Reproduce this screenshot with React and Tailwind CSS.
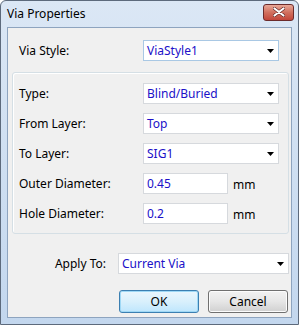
const font = { fontFamily: '"Noto Sans", "DejaVu Sans", sans-serif' };

const Arrow = () => (
    <svg width="7" height="4" viewBox="0 0 7 4" className="shrink-0">
        <path d="M0 0H7L3.5 4Z" fill="#000" />
    </svg>
);

const Select = ({ value, width = 'w-[136px]', focused = false }) => (
    <div className={`${width} h-[21px] flex items-center justify-between pl-[3px] pr-[4px] bg-white border ${focused ? 'border-[#a9c8e4]' : 'border-[#d6d9dd]'} text-[#2010c8] text-[12px]`}>
        <span>{value}</span>
        <Arrow />
    </div>
);

const Input = ({ value }) => (
    <div className="w-[85px] h-[21px] flex items-center pl-[3px] bg-white border border-[#d6d9dd] text-[#2010c8] text-[12px]">
        {value}
    </div>
);

const Row = ({ label, children }) => (
    <div className="flex items-center h-[21px]">
        <div className="w-[130px] pl-[6px] text-[12px] text-black">{label}</div>
        {children}
    </div>
);

const App = () => {
    return (
        <div style={font} className="w-[299px] h-[325px] flex flex-col bg-gradient-to-b from-[#dbe7f5] to-[#c3d7ee] border border-[#5d6a7c] rounded-t-[6px]">
            <div className="h-[26px] shrink-0 flex items-center justify-between pl-[6px] pr-[4px]">
                <span className="text-[12px] text-black mt-[-1px]">Via Properties</span>
                <div className="w-[31px] h-[17px] mt-[-4px] rounded-[3px] border border-[#6b2b2b] bg-gradient-to-b from-[#e8a797] via-[#d16f5e] to-[#c2453a] flex items-center justify-center">
                    <svg width="12" height="10" viewBox="0 0 12 10">
                        <path d="M1.5 1.5L10.5 8.5M10.5 1.5L1.5 8.5" stroke="#5a2020" strokeWidth="3.4" strokeLinecap="round" />
                        <path d="M1.5 1.5L10.5 8.5M10.5 1.5L1.5 8.5" stroke="#fff" strokeWidth="2.2" strokeLinecap="round" />
                    </svg>
                </div>
            </div>
            <div className="flex-1 mx-[6px] mb-[6px] bg-[#f0f0f0] border border-[#8ea4bf] flex flex-col">
                <div className="flex items-center h-[21px] mt-[12px]">
                    <div className="w-[135px] pl-[11px] text-[12px] text-black">Via Style:</div>
                    <Select value="ViaStyle1" focused />
                </div>
                <div className="mt-[11px] ml-[4px] w-[277px] h-[162px] rounded-[3px] border border-[#d5dfe5] shadow-[inset_1px_1px_0_#fff] flex flex-col gap-[9px] pt-[10px]">
                    <Row label="Type:"><Select value="Blind/Buried" /></Row>
                    <Row label="From Layer:"><Select value="Top" /></Row>
                    <Row label="To Layer:"><Select value="SIG1" /></Row>
                    <Row label="Outer Diameter:">
                        <Input value="0.45" />
                        <span className="ml-[5px] mt-[3px] text-[12px] text-black">mm</span>
                    </Row>
                    <Row label="Hole Diameter:">
                        <Input value="0.2" />
                        <span className="ml-[5px] mt-[3px] text-[12px] text-black">mm</span>
                    </Row>
                </div>
                <div className="flex items-center h-[21px] mt-[19px]">
                    <div className="w-[110px] pr-[12px] text-right text-[12px] text-black">Apply To:</div>
                    <Select value="Current Via" width="w-[171px]" />
                </div>
                <div className="flex justify-end gap-[9px] mt-[16px] pr-[3px]">
                    <button className="w-[80px] h-[23px] rounded-[3px] border border-[#3c7fb1] bg-gradient-to-b from-[#eaf6fd] via-[#d9f0fc] to-[#bee6fd] shadow-[inset_0_0_0_1px_#9fd8f5] text-[12px] text-black">OK</button>
                    <button className="w-[80px] h-[23px] rounded-[3px] border border-[#707070] bg-gradient-to-b from-[#f2f2f2] via-[#e6e6e6] to-[#d0d0d0] shadow-[inset_0_0_0_1px_#fcfcfc] text-[12px] text-black">Cancel</button>
                </div>
            </div>
        </div>
    );
};

export default App;
